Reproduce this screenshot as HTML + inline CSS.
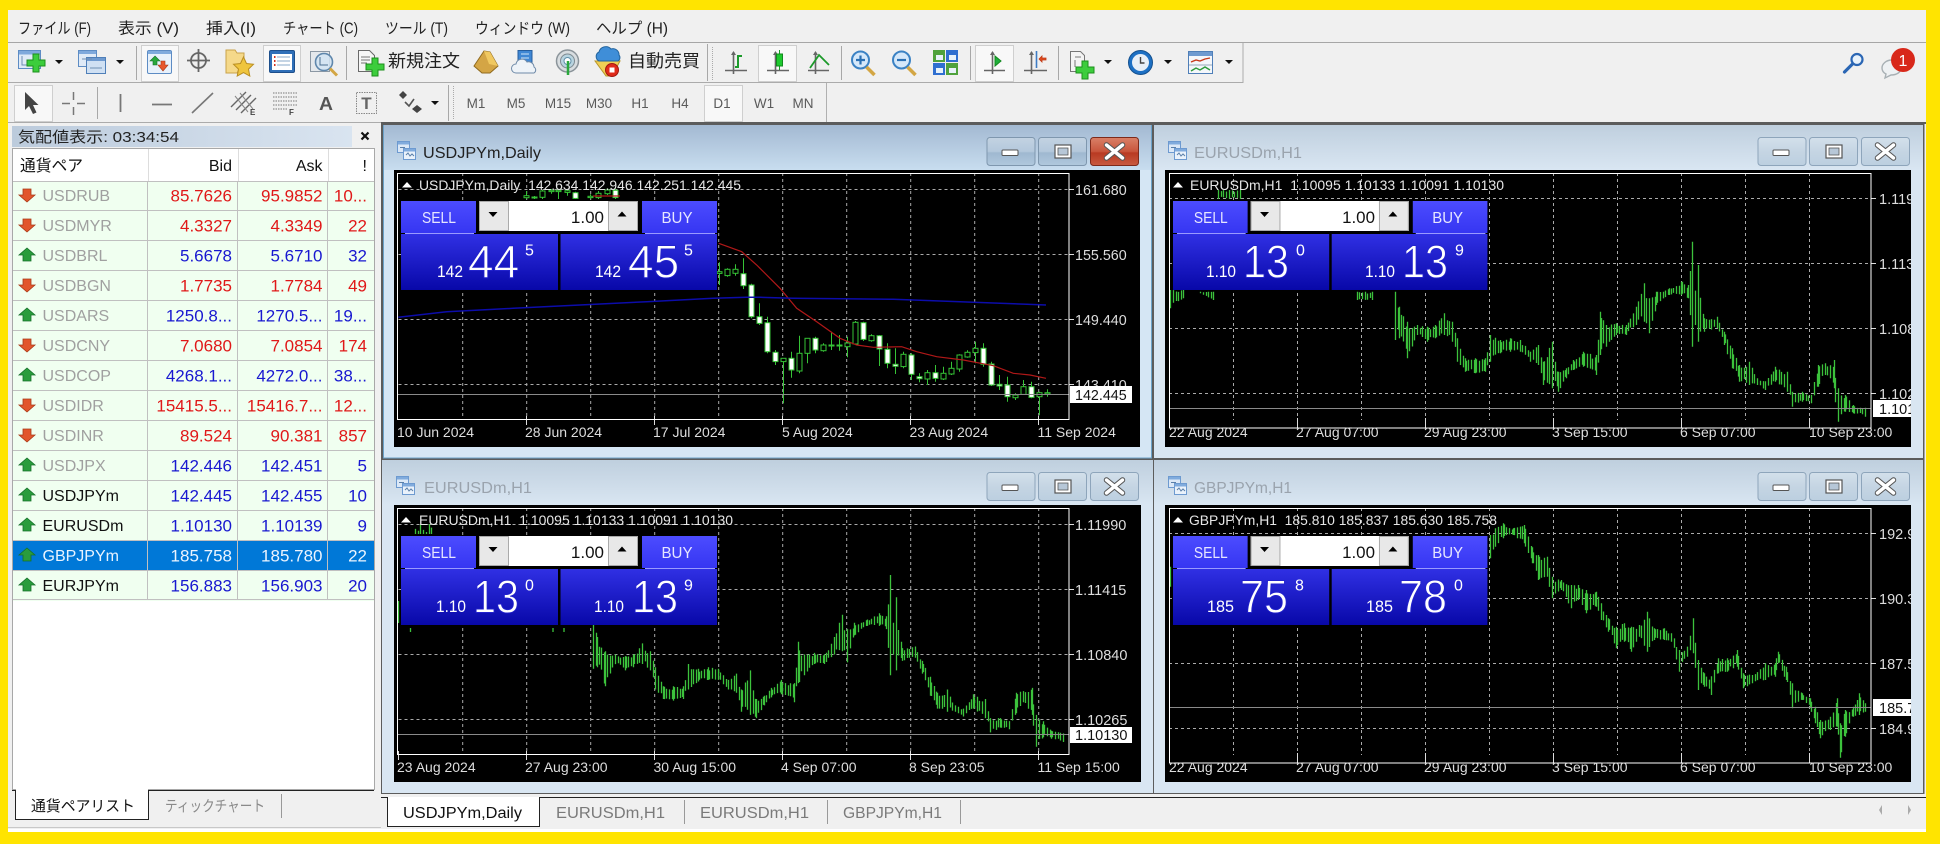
<!DOCTYPE html>
<html><head><meta charset="utf-8"><title>MT5</title>
<style>html,body{margin:0;padding:0;background:#ffe400;overflow:hidden;width:1940px;height:844px}svg{display:block;font-family:"Liberation Sans","Noto Sans CJK JP",sans-serif}</style>
</head><body>
<svg xmlns="http://www.w3.org/2000/svg" width="1940" height="844" viewBox="0 0 1940 844">
<defs>
<linearGradient id="tA" x1="0" y1="0" x2="0" y2="1"><stop offset="0" stop-color="#a3b9d2"/><stop offset="1" stop-color="#c8ddef"/></linearGradient>
<linearGradient id="tI" x1="0" y1="0" x2="0" y2="1"><stop offset="0" stop-color="#bfcfde"/><stop offset="1" stop-color="#d9e6f2"/></linearGradient>
<linearGradient id="tb" x1="0" y1="0" x2="1" y2="0"><stop offset="0" stop-color="#bccbdc"/><stop offset="1" stop-color="#d9e4f0"/></linearGradient>
<linearGradient id="gT" x1="0" y1="0" x2="0" y2="1"><stop offset="0" stop-color="#4c4cff"/><stop offset="1" stop-color="#3636f2"/></linearGradient>
<linearGradient id="gB" x1="0" y1="0" x2="0" y2="1"><stop offset="0" stop-color="#3030e4"/><stop offset="1" stop-color="#0808a8"/></linearGradient>
<linearGradient id="bI" x1="0" y1="0" x2="0" y2="1"><stop offset="0" stop-color="#d3e0eb"/><stop offset=".5" stop-color="#c5d5e3"/><stop offset="1" stop-color="#bccfe0"/></linearGradient>
<linearGradient id="bA" x1="0" y1="0" x2="0" y2="1"><stop offset="0" stop-color="#c3d3e2"/><stop offset=".5" stop-color="#b4c8dc"/><stop offset=".55" stop-color="#9fb8d0"/><stop offset="1" stop-color="#b0c8dd"/></linearGradient>
<linearGradient id="bC" x1="0" y1="0" x2="0" y2="1"><stop offset="0" stop-color="#d98068"/><stop offset=".5" stop-color="#c8553c"/><stop offset=".55" stop-color="#b83a22"/><stop offset="1" stop-color="#c85a40"/></linearGradient>

<g id="xi"><path d="M0 0L16 13M16 0L0 13" stroke="#555" stroke-width="5.5" stroke-linecap="round"/><path d="M0 0L16 13M16 0L0 13" stroke="#fff" stroke-width="3.4" stroke-linecap="round"/></g>
<g id="mm"><rect x="15.5" y="13" width="16" height="5.5" rx="1" fill="#fff" stroke="#555"/><rect x="68.5" y="8" width="16" height="13" fill="#fff" stroke="#555" stroke-width="1.2"/><rect x="71.5" y="11" width="10" height="7" fill="#b7c7d7" stroke="#555" stroke-width=".8"/></g>
<g id="wbI"><rect x=".5" y=".5" width="48" height="28" rx="3" fill="url(#bI)" stroke="#8ea5bb"/><rect x="52" y=".5" width="48" height="28" rx="3" fill="url(#bI)" stroke="#8ea5bb"/><rect x="104" y=".5" width="48" height="28" rx="3" fill="url(#bI)" stroke="#8ea5bb"/><use href="#mm"/><use href="#xi" x="120" y="8"/></g>

<g id="panel">
<rect x="0" y="0" width="316" height="89" fill="#000"/>
<rect x="0" y="0" width="75" height="32" fill="url(#gT)"/>
<rect x="241" y="0" width="75" height="32" fill="url(#gT)"/>
<rect x="0" y="33" width="157" height="56" fill="url(#gB)"/>
<rect x="159.500" y="33" width="156.500" height="56" fill="url(#gB)"/>
<path d="M4 32.500H73M244 32.500H314" stroke="#9a9aff"/>
<rect x="78" y="0" width="159" height="30" fill="#fff"/>
<rect x="78.500" y=".5" width="29" height="29" fill="#e8e8e8" stroke="#aaa"/>
<rect x="207.500" y=".5" width="29" height="29" fill="#e8e8e8" stroke="#aaa"/>
<path d="M87.500 11h9l-4.500 5zM216.500 15.500h9l-4.500-5z" fill="#000"/>
<text x="38" y="223" dy="-201" font-size="16" fill="#e6e6ff" text-anchor="middle" textLength="34" lengthAdjust="spacingAndGlyphs">SELL</text>
<text x="276" y="223" dy="-201" font-size="16" fill="#e6e6ff" text-anchor="middle" textLength="31" lengthAdjust="spacingAndGlyphs">BUY</text>
<text x="203" y="22" font-size="17" fill="#111" text-anchor="end">1.00</text>
</g>

<g id="wic"><rect x=".5" y=".5" width="12" height="11" fill="#dbe8f7" stroke="#6d9ad0"/><rect x="1" y="1" width="11" height="2.500" fill="#80abdd"/><rect x="6.500" y="7.500" width="12" height="11" fill="#eaf2fb" stroke="#6d9ad0"/><rect x="7" y="8" width="11" height="2.500" fill="#80abdd"/><path d="M3 6.500h5M9 14l2-2 2 3 2-2 2 2" stroke="#5a7fa8" fill="none" stroke-width="1"/></g>

<g id="plus"><path d="M-3 -9h6v6h6v6h-6v6h-6v-6h-6v-6h6z" fill="#3ccd3c" stroke="#1c8f1c"/></g>
<g id="up"><path d="M0-7L8 0H4V6H-4V0H-8Z" fill="#2a9c3c" stroke="#15702a" stroke-width=".8"/></g>
<g id="dn"><path d="M-4-6H4V0H8L0 7L-8 0H-4Z" fill="#e2562c" stroke="#a83a18" stroke-width=".8"/></g>
<clipPath id="c1"><rect x="397" y="173" width="672" height="247"/></clipPath>
<clipPath id="c2"><rect x="1169" y="173" width="702" height="255"/></clipPath>
<clipPath id="c3"><rect x="397" y="508" width="672" height="247"/></clipPath>
<clipPath id="c4"><rect x="1169" y="508" width="702" height="255"/></clipPath>
<clipPath id="k1"><rect x="394" y="170" width="746" height="277"/></clipPath>
<clipPath id="k2"><rect x="1165" y="170" width="746" height="277"/></clipPath>
<clipPath id="k3"><rect x="394" y="505" width="747" height="277"/></clipPath>
<clipPath id="k4"><rect x="1165" y="505" width="746" height="277"/></clipPath>
</defs>

<rect width="1940" height="844" fill="#ffe400"/>
<rect x="8" y="10" width="1918" height="822" fill="#f0f0f0"/>
<rect x="8" y="829" width="1918" height="3" fill="#fff"/>

<!-- menu -->
<g font-size="15.500" fill="#222">
<text x="18" y="33.500" textLength="73" lengthAdjust="spacingAndGlyphs">ファイル (F)</text>
<text x="118" y="33.500" textLength="61" lengthAdjust="spacingAndGlyphs">表示 (V)</text>
<text x="206" y="33.500" textLength="50" lengthAdjust="spacingAndGlyphs">挿入(I)</text>
<text x="283" y="33.500" textLength="75" lengthAdjust="spacingAndGlyphs">チャート (C)</text>
<text x="385" y="33.500" textLength="63" lengthAdjust="spacingAndGlyphs">ツール (T)</text>
<text x="475" y="33.500" textLength="95" lengthAdjust="spacingAndGlyphs">ウィンドウ (W)</text>
<text x="596" y="33.500" textLength="72" lengthAdjust="spacingAndGlyphs">ヘルプ (H)</text>
</g>
<path d="M8 42.500H1926" stroke="#a6a6a6"/>
<path d="M8 82.500H1243V43M8 122.500H381" stroke="#ababab" fill="none"/>
<path d="M826.500 83V122" stroke="#b0b0b0"/>

<!-- toolbar separators -->
<path d="M136.500 46V80M346.500 46V80M707.500 44V81M841.500 46V80M970.500 46V80M1058.500 46V80M97.500 87V119M448.500 85V121" stroke="#a8a8a8"/>
<path d="M712.500 47V80M453.500 86V120" stroke="#aaa" stroke-dasharray="1 1"/>

<!-- pressed -->
<g fill="#f8f8f8" stroke="#cfcfcf"><rect x="141.500" y="45.500" width="37" height="36"/><rect x="263.500" y="45.500" width="37" height="36"/><rect x="758.500" y="45.500" width="38" height="36"/><rect x="975.500" y="45.500" width="38" height="36"/><rect x="14.500" y="85.500" width="38" height="36"/><rect x="704.500" y="85.500" width="38" height="36"/></g>

<!-- new chart -->
<rect x="18.500" y="50.500" width="22" height="18" fill="#dfeaf7" stroke="#5d8cc4"/><rect x="19" y="51" width="21" height="3.500" fill="#7fa9dc"/><path d="M22 56v9h8" stroke="#6f8fb3" fill="none"/>
<use href="#plus" x="36" y="63"/>
<path d="M55 60h8l-4 4z" fill="#111"/>
<!-- profiles -->
<rect x="78.500" y="50.500" width="18" height="16" fill="#dfeaf7" stroke="#5d8cc4"/><rect x="79" y="51" width="17" height="3" fill="#7fa9dc"/>
<rect x="86.500" y="57.500" width="19" height="16" fill="#cfe0f3" stroke="#4f7fb8"/><rect x="87" y="58" width="18" height="3" fill="#6e9ad0"/><path d="M82 59h10M90 68h12" stroke="#6f8fb3"/>
<path d="M116 60h8l-4 4z" fill="#111"/>
<!-- market watch -->
<rect x="147.500" y="50.500" width="24" height="23" rx="1.500" fill="#e8f1fb" stroke="#5d8cc4"/><rect x="148" y="51" width="23" height="3" fill="#80abdd"/>
<path d="M155 56l5 5h-3v4h-4v-4h-3z" fill="#2aa83c" stroke="#15702a" stroke-width=".6"/><path d="M161 61h4v4h3l-5 6-5-6h3z" fill="#e8562c" stroke="#a83a18" stroke-width=".6"/>
<!-- crosshair -->
<circle cx="198.500" cy="60.500" r="7.500" fill="none" stroke="#666" stroke-width="1.800"/><path d="M198.500 49V72M187 60.500H210" stroke="#666" stroke-width="1.800"/>
<!-- folders star -->
<path d="M226 50h9l2 3h7v8l-7 12h-11z" fill="#f5d98a" stroke="#c9a24a"/><path d="M243.500 57l3 6.500 7 .8-5 4.800 1.300 7-6.300-3.500-6.300 3.500 1.300-7-5-4.800 7-.8z" fill="#efc53e" stroke="#b98e22"/>
<!-- navigator -->
<rect x="269.500" y="50.500" width="25" height="22" rx="1.500" fill="#2f6fb8" stroke="#1d4f8c"/><rect x="272" y="54" width="20" height="16" fill="#fff"/><path d="M274 57h1.500M274 61h1.500M274 65h1.500" stroke="#d03020" stroke-width="2"/><path d="M277 57h13M277 61h13M277 65h13" stroke="#8aa8c8"/>
<!-- tester -->
<rect x="310.500" y="51.500" width="19" height="20" fill="#e4e8ec" stroke="#8c98a4"/><circle cx="324" cy="62" r="8.500" fill="#d2e4f3" fill-opacity=".85" stroke="#5f87ac" stroke-width="1.600"/><path d="M330 68.500l7 7" stroke="#d3a644" stroke-width="3"/><path d="M320 57v8h8" fill="none" stroke="#4a6f90"/>
<!-- new order -->
<path d="M358.500 50.500h11l5 5v16h-16z" fill="#f6f6f6" stroke="#6a6a6a"/><path d="M361 57h9M361 60h9M361 63h6" stroke="#777"/>
<use href="#plus" x="375" y="67"/>
<text x="388" y="67" font-size="17.500" fill="#222" textLength="72" lengthAdjust="spacingAndGlyphs">新規注文</text>
<!-- market -->
<path d="M474 66l10-15 6 1 8 14-8 7h-8z" fill="#d4a545" stroke="#8f6a1f"/><path d="M484 51l6 1 8 14-9-2z" fill="#f0c860"/>
<!-- signals/vps -->
<rect x="518" y="50.500" width="14" height="15" fill="#3f87d4" stroke="#265e9e"/><path d="M521 54h8M521 58h8" stroke="#cfe4f8"/><path d="M516 73a4.500 4.500 0 0 1 0-9 6 6 0 0 1 11-2 5.500 5.500 0 0 1 7 5 3.500 3.500 0 0 1 0 6z" fill="#eef3f8" stroke="#6f8aa8"/>
<!-- radar -->
<circle cx="567.500" cy="61" r="11" fill="#d8dde0" stroke="#8b949a" stroke-width="1.500"/><circle cx="567.500" cy="61" r="7" fill="#b8d4e0" stroke="#7e8a90"/><circle cx="567.500" cy="61" r="3.500" fill="#fff" stroke="#5f8fa8"/><path d="M568 61v14" stroke="#2aa83c" stroke-width="2.500"/>
<!-- auto trading -->
<path d="M595 61l11 15h6l8-15z" fill="#f0cf55" stroke="#b8962a"/><path d="M599 61a5 5 0 0 1 0-9 7 7 0 0 1 12-3 6 6 0 0 1 8 6 4 4 0 0 1-1 6z" fill="#3f8ed8" stroke="#24659e"/><circle cx="612" cy="70" r="6.500" fill="#e02a1a" stroke="#a01810"/><rect x="609.500" y="67.500" width="5" height="5" fill="#fff"/>
<text x="628" y="67" font-size="17.500" fill="#222" textLength="72" lengthAdjust="spacingAndGlyphs">自動売買</text>

<!-- chart types -->
<g stroke="#666" stroke-width="1.600" fill="none">
<path d="M733.500 52V74M725 70.500H747"/><path d="M775.500 52V74M767 70.500H789"/><path d="M815.500 52V74M808 70.500H829"/>
<path d="M992.500 52V74M984 70.500H1005"/><path d="M1031.500 52V74M1024 70.500H1047"/>
</g>
<path d="M733.500 51l-2.500 4h5zM775.500 51l-2.500 4h5zM815.500 51l-2.500 4h5zM992.500 51l-2.500 4h5zM1031.500 51l-2.500 4h5z" fill="#666"/>
<path d="M738 68V56h4" stroke="#1c9a2a" stroke-width="2" fill="none"/><path d="M735 67h4" stroke="#1c9a2a" stroke-width="2"/>
<path d="M779.500 50V70" stroke="#1a9a28"/><rect x="776.500" y="54" width="6" height="12" fill="#1fc92f" stroke="#128a1e"/>
<path d="M810 68l9-13 10 10" stroke="#1c9a2a" stroke-width="1.800" fill="none"/>
<!-- zoom -->
<circle cx="860.500" cy="60" r="8.500" fill="#d5e8fa" stroke="#3b82c4" stroke-width="2"/><path d="M856 60h9M860.500 55.500v9" stroke="#2a70b4" stroke-width="2.200"/><path d="M866.500 67l8 8" stroke="#d3a644" stroke-width="3.500"/>
<circle cx="901.500" cy="60" r="8.500" fill="#d5e8fa" stroke="#3b82c4" stroke-width="2"/><path d="M897 60h9" stroke="#2a70b4" stroke-width="2.200"/><path d="M907.500 67l8 8" stroke="#d3a644" stroke-width="3.500"/>
<!-- tile -->
<rect x="933" y="50" width="12" height="12" fill="#4fa23c"/><rect x="946" y="50" width="12" height="12" fill="#2f6fd0"/><rect x="933" y="63" width="12" height="12" fill="#2f6fd0"/><rect x="946" y="63" width="12" height="12" fill="#4fa23c"/>
<g fill="#e8f2fa"><rect x="936" y="55" width="7" height="5"/><rect x="949" y="55" width="7" height="5"/><rect x="936" y="68" width="7" height="5"/><rect x="949" y="68" width="7" height="5"/></g>
<!-- autoscroll / shift -->
<path d="M995 56l6 5-6 5z" fill="#1fae3a" stroke="#128a1e"/>
<path d="M1036.500 51V68" stroke="#3e7cc4" stroke-width="1.600"/><path d="M1039 59l3-3v2h4v2h-4v2z" fill="#e04a20" stroke="#c03a14" stroke-width=".8"/>
<!-- template -->
<path d="M1070.500 51.500h10l4 4v16h-14z" fill="#f4f4f4" stroke="#777"/><path d="M1075 57h6M1075 60v7" stroke="#777"/>
<use href="#plus" x="1085" y="70"/>
<path d="M1104 60h8l-4 4z" fill="#111"/>
<!-- clock -->
<circle cx="1140.500" cy="62.500" r="12" fill="#1d70c4" stroke="#14508e"/><circle cx="1140.500" cy="62.500" r="8.500" fill="#e8eff7"/><path d="M1140.500 57v6h4" stroke="#444" fill="none" stroke-width="1.400"/>
<path d="M1164 60h8l-4 4z" fill="#111"/>
<!-- indicators -->
<rect x="1188.500" y="51.500" width="24" height="22" fill="#f4f7fb" stroke="#4f7fb8"/><rect x="1189" y="52" width="23" height="4" fill="#6e9ad0"/><path d="M1191 62l5-2 4 1 5-2 5-1" stroke="#c83a1c" fill="none" stroke-width="1.400"/><path d="M1191 71l5-3 4 2 5-3 5 3" stroke="#2c9a3a" fill="none" stroke-width="1.400"/><path d="M1189 65h23" stroke="#9ab"/>
<path d="M1225 60h8l-4 4z" fill="#111"/>
<!-- search / bubble -->
<circle cx="1857" cy="59.500" r="5.500" fill="#e8f2fb" stroke="#2a66b4" stroke-width="2.200"/><path d="M1852.500 64l-8 8" stroke="#2a66b4" stroke-width="3.200" stroke-linecap="round"/>
<path d="M1892 60c-6 0-10 4-10 8 0 3 2 5 4 6l-1 4 6-3c6 0 10-3 10-7 0-5-4-8-9-8z" fill="#eef1f3" stroke="#a8b0b4" stroke-width="1.400"/>
<circle cx="1903" cy="60" r="12" fill="#d8281a"/><text x="1903" y="66" font-size="16" fill="#fff" text-anchor="middle">1</text>

<!-- toolbar 2 -->
<path d="M25 92V110L29 106L33 114L36.500 112.500L33 105H38.500Z" fill="#444"/>
<path d="M62 103.500H70M77 103.500H85M73.500 92V100M73.500 107V115" stroke="#777" stroke-width="1.500"/>
<path d="M120.500 94V112" stroke="#777" stroke-width="1.800"/><path d="M152 104.500H172" stroke="#777" stroke-width="1.800"/><path d="M192 113L213 93" stroke="#777" stroke-width="1.600"/>
<path d="M231 107L246 92M236 110L251 95M241 113L256 98" stroke="#666" stroke-width="1.400"/><path d="M235 96L248 112M240 93L253 109" stroke="#888"/>
<text x="250" y="115" font-size="8" font-weight="bold" fill="#444">E</text>
<path d="M273 93H297M273 97H297M273 101H297M273 105H297M273 109H287" stroke="#777" stroke-dasharray="1.500 1"/>
<text x="289" y="115" font-size="8" font-weight="bold" fill="#444">F</text>
<text x="319" y="110" font-size="18" font-weight="bold" fill="#555" textLength="14" lengthAdjust="spacingAndGlyphs">A</text>
<rect x="356.500" y="92.500" width="20" height="21" fill="none" stroke="#888" stroke-dasharray="1.500 1"/><text x="366.500" y="109" font-size="17" font-weight="bold" fill="#666" text-anchor="middle">T</text>
<path d="M403 91l4 4-4 4-4-4zM417 105l5 4-5 4-5-4z" fill="#444"/><path d="M405 102l4 4 5-7" stroke="#555" stroke-width="1.600" fill="none"/>
<path d="M431 101h8l-4 4z" fill="#111"/>
<g font-size="13.500" fill="#5a5a5a" text-anchor="middle">
<text x="476" y="108">M1</text><text x="516" y="108">M5</text><text x="558" y="108">M15</text><text x="599" y="108">M30</text><text x="640" y="108">H1</text><text x="680" y="108">H4</text><text x="722" y="108">D1</text><text x="764" y="108">W1</text><text x="803" y="108">MN</text>
</g>

<!-- LEFT PANEL -->
<rect x="12" y="126" width="340" height="21" fill="url(#tb)"/>
<text x="18" y="142" font-size="15" fill="#222" textLength="161" lengthAdjust="spacingAndGlyphs">気配値表示: 03:34:54</text>
<path d="M361.500 132.500l7 7m0-7l-7 7" stroke="#111" stroke-width="2.200"/>
<rect x="12.500" y="148.500" width="362" height="641" fill="#fff" stroke="#a8a8a8"/>
<rect x="13" y="181" width="361" height="420" fill="#f0fff0"/>
<rect x="13" y="540" width="361" height="30" fill="#0078d7"/>
<path d="M148.500 149V181M238.500 149V181M328.500 149V181" stroke="#ddd"/>
<path d="M13 181.500H374M13 210.500H374M13 240.500H374M13 270.500H374M13 300.500H374M13 330.500H374M13 360.500H374M13 390.500H374M13 420.500H374M13 450.500H374M13 480.500H374M13 510.500H374M13 540.500H374M13 570.500H374M13 599.500H374M147.500 181V600M237.500 181V600M327.500 181V600" stroke="#c0c0c0"/>
<g font-size="16" fill="#111">
<text x="20" y="171" textLength="63" lengthAdjust="spacingAndGlyphs">通貨ペア</text>
<text x="232" y="171" text-anchor="end">Bid</text><text x="322.500" y="171" text-anchor="end">Ask</text><text x="367" y="171" text-anchor="end">!</text>
</g>
<g transform="translate(0 -1)">
<g font-size="16" fill="#a0a0a0">
<text x="42.500" y="202">USDRUB</text><text x="42.500" y="232">USDMYR</text><text x="42.500" y="262">USDBRL</text><text x="42.500" y="292">USDBGN</text><text x="42.500" y="322">USDARS</text><text x="42.500" y="352">USDCNY</text><text x="42.500" y="382">USDCOP</text><text x="42.500" y="412">USDIDR</text><text x="42.500" y="442">USDINR</text><text x="42.500" y="472">USDJPX</text>
<text x="42.500" y="502" fill="#111">USDJPYm</text><text x="42.500" y="532" fill="#111">EURUSDm</text><text x="42.500" y="562" fill="#eaf4ff">GBPJPYm</text><text x="42.500" y="592" fill="#111">EURJPYm</text>
</g>
<g>
<use href="#dn" x="27" y="196"/><use href="#dn" x="27" y="226"/><use href="#up" x="27" y="256"/><use href="#dn" x="27" y="286"/><use href="#up" x="27" y="316"/><use href="#dn" x="27" y="346"/><use href="#up" x="27" y="376"/><use href="#dn" x="27" y="406"/><use href="#dn" x="27" y="436"/><use href="#up" x="27" y="466"/><use href="#up" x="27" y="496"/><use href="#up" x="27" y="526"/><use href="#up" x="27" y="556"/><use href="#up" x="27" y="586"/>
</g>
<g font-size="17" text-anchor="end" fill="#e01818">
<text x="232" y="202.500">85.7626</text><text x="322.500" y="202.500">95.9852</text><text x="367" y="202.500">10...</text>
<text x="232" y="232.500">4.3327</text><text x="322.500" y="232.500">4.3349</text><text x="367" y="232.500">22</text>
<text x="232" y="292.500">1.7735</text><text x="322.500" y="292.500">1.7784</text><text x="367" y="292.500">49</text>
<text x="232" y="352.500">7.0680</text><text x="322.500" y="352.500">7.0854</text><text x="367" y="352.500">174</text>
<text x="232" y="412.500">15415.5...</text><text x="322.500" y="412.500">15416.7...</text><text x="367" y="412.500">12...</text>
<text x="232" y="442.500">89.524</text><text x="322.500" y="442.500">90.381</text><text x="367" y="442.500">857</text>
</g>
<g font-size="17" text-anchor="end" fill="#1818d0">
<text x="232" y="262.500">5.6678</text><text x="322.500" y="262.500">5.6710</text><text x="367" y="262.500">32</text>
<text x="232" y="322.500">1250.8...</text><text x="322.500" y="322.500">1270.5...</text><text x="367" y="322.500">19...</text>
<text x="232" y="382.500">4268.1...</text><text x="322.500" y="382.500">4272.0...</text><text x="367" y="382.500">38...</text>
<text x="232" y="472.500">142.446</text><text x="322.500" y="472.500">142.451</text><text x="367" y="472.500">5</text>
<text x="232" y="502.500">142.445</text><text x="322.500" y="502.500">142.455</text><text x="367" y="502.500">10</text>
<text x="232" y="532.500">1.10130</text><text x="322.500" y="532.500">1.10139</text><text x="367" y="532.500">9</text>
<text x="232" y="592.500">156.883</text><text x="322.500" y="592.500">156.903</text><text x="367" y="592.500">20</text>
</g>
<g font-size="17" text-anchor="end" fill="#eaf4ff">
<text x="232" y="562.500">185.758</text><text x="322.500" y="562.500">185.780</text><text x="367" y="562.500">22</text>
</g>
</g>
<!-- left tabs -->
<rect x="9" y="790" width="372" height="38" fill="#f0f0f0"/>
<path d="M12 790.500H374" stroke="#222"/>
<path d="M15.500 790.500V819.500H148.500V790.500" fill="#fff" stroke="#222"/><rect x="16" y="788" width="132" height="31" fill="#fff"/><path d="M15.500 819.500H148.500M148.500 790V820M15.500 790V820" stroke="#222"/><path d="M148 790.500H374" stroke="#222"/>
<text x="31" y="811" font-size="15" fill="#111" textLength="104" lengthAdjust="spacingAndGlyphs">通貨ペアリスト</text>
<text x="165" y="811" font-size="15" fill="#8a8a8a" textLength="100" lengthAdjust="spacingAndGlyphs">ティックチャート</text>
<path d="M281.500 794V818" stroke="#999"/>
<path d="M8 827.500H381" stroke="#c8c8c8"/>

<!-- CHART AREA -->
<rect x="381" y="122" width="1545" height="675" fill="#5c5c5c"/>
<rect x="1924.500" y="124" width="1.500" height="673" fill="#f0f0f0"/>
<rect x="381" y="794" width="1545" height="3" fill="#f0f0f0"/>

<!-- W1 -->
<rect x="383" y="125" width="769" height="45" fill="url(#tA)"/>
<rect x="383" y="170" width="769" height="288" fill="#d5e6f4"/>
<path d="M383.500 125V458M1151.500 125V458H383" stroke="#6ba2c8" fill="none"/>
<use href="#wic" x="397" y="141"/>
<text x="423" y="158" font-size="16" fill="#222" textLength="118" lengthAdjust="spacingAndGlyphs">USDJPYm,Daily</text>
<g transform="translate(986.500 137)"><rect x=".5" y=".5" width="48" height="28" rx="3" fill="url(#bA)" stroke="#7f97ae"/><rect x="52" y=".5" width="48" height="28" rx="3" fill="url(#bA)" stroke="#7f97ae"/><rect x="104" y=".5" width="48" height="28" rx="3" fill="url(#bC)" stroke="#7d2a1b"/><use href="#mm"/><use href="#xi" x="120" y="8"/></g>
<rect x="394" y="170" width="746" height="277" fill="#000"/>
<g clip-path="url(#k1)">
<path d="M398.500 189.500H1069M398.500 254.500H1069M398.500 319.500H1069M398.500 384.500H1069M462.700 173V420M526.700 173V420M590.700 173V420M654.700 173V420M718.700 173V420M782.700 173V420M846.700 173V420M910.700 173V420M974.700 173V420M1038.700 173V420" stroke="#aaa" stroke-dasharray="3 3" fill="none"/>
<path d="M1069 189.500h5M1069 254.500h5M1069 319.500h5M1069 384.500h5M526.500 416v9M654.500 416v9M782.500 416v9M910.500 416v9M1038.500 416v9" stroke="#ddd"/>
<g clip-path="url(#c1)"><g id="cand"></g><polyline id="mr" fill="none" stroke="#b01818" stroke-width="1.200"/><polyline id="mb" fill="none" stroke="#0c0caa" stroke-width="1.500"/><path d="M593 196H620" stroke="#b01818" stroke-width="1.200"/></g>
<path d="M397 394.500H1069" stroke="#8a8a8a"/>
<rect x="397.500" y="173.500" width="671.500" height="246" fill="none" stroke="#fff"/>
<g font-size="14.300" fill="#ddd"><text x="1075" y="195">161.680</text><text x="1075" y="260">155.560</text><text x="1075" y="325">149.440</text><text x="1075" y="390">143.410</text></g>
<rect x="1070" y="386" width="62" height="17" fill="#fff"/><text x="1075" y="400" font-size="14.300" fill="#111">142.445</text>
<g font-size="14" fill="#ddd"><text x="397" y="437">10 Jun 2024</text><text x="525" y="437">28 Jun 2024</text><text x="653" y="437">17 Jul 2024</text><text x="782" y="437">5 Aug 2024</text><text x="909.500" y="437">23 Aug 2024</text><text x="1037.500" y="437">11 Sep 2024</text></g>
</g>
<use href="#panel" x="401" y="201"/>
<path d="M402 187.500h10l-5-5.500z" fill="#fff"/>
<text x="419" y="190" font-size="13.500" fill="#e6e6e6" textLength="322" lengthAdjust="spacingAndGlyphs">USDJPYm,Daily&#160;&#160;142.634 142.946 142.251 142.445</text>
<g fill="#fff"><text x="437" y="277" font-size="17" textLength="26" lengthAdjust="spacingAndGlyphs">142</text><text x="468" y="277.500" font-size="46" stroke="#2222cc" stroke-width=".9">44</text><text x="525" y="255.500" font-size="16">5</text><text x="595" y="277" font-size="17" textLength="26" lengthAdjust="spacingAndGlyphs">142</text><text x="628" y="277.500" font-size="46" stroke="#2222cc" stroke-width=".9">45</text><text x="684" y="255.500" font-size="16">5</text></g>

<!-- W2 -->
<rect x="1154" y="125" width="769" height="45" fill="url(#tI)"/>
<rect x="1154" y="170" width="769" height="288" fill="#d9e6f2"/>
<use href="#wic" x="1168" y="141"/>
<text x="1194" y="158" font-size="16" fill="#9aa3ad" textLength="108" lengthAdjust="spacingAndGlyphs">EURUSDm,H1</text>
<use href="#wbI" x="1757.500" y="137"/>
<rect x="1165" y="170" width="746" height="277" fill="#000"/>
<g clip-path="url(#k2)">
<path d="M1169 198.500H1871M1169 263.500H1871M1169 328.500H1871M1169 393.500H1871M1233.500 173V420M1297.500 173V420M1361.500 173V420M1425.500 173V420M1489.500 173V420M1553.500 173V420M1617.500 173V420M1681.500 173V420M1745.500 173V420M1809.500 173V420" stroke="#aaa" stroke-dasharray="3 3" fill="none"/>
<path d="M1871 198.500h5M1871 263.500h5M1871 328.500h5M1871 393.500h5M1169.500 418v10M1297.500 418v10M1425.500 418v10M1553.500 418v10M1681.500 418v10M1809.500 418v10" stroke="#ddd"/>
<g clip-path="url(#c2)"><path id="b2" stroke="#3cc23c" stroke-width="1.300" fill="none"/></g>
<path d="M1169 408.500H1871" stroke="#8a8a8a"/>
<rect x="1169.500" y="173.500" width="701.500" height="254.500" fill="none" stroke="#fff"/>
<g font-size="14.500" fill="#ddd"><text x="1879" y="204">1.11950</text><text x="1879" y="269">1.11375</text><text x="1879" y="334">1.10800</text><text x="1879" y="399">1.10225</text></g>
<rect x="1873" y="400" width="38" height="17" fill="#fff"/><text x="1879" y="414" font-size="14.500" fill="#111">1.10130</text>
</g>
<g font-size="14" fill="#ddd"><text x="1169" y="437">22 Aug 2024</text><text x="1296" y="437">27 Aug 07:00</text><text x="1424" y="437">29 Aug 23:00</text><text x="1552" y="437">3 Sep 15:00</text><text x="1680" y="437">6 Sep 07:00</text><text x="1809" y="437">10 Sep 23:00</text></g>
<use href="#panel" transform="translate(1173 201) scale(.995 1)"/>
<path d="M1173 187.500h10l-5-5.500z" fill="#fff"/>
<text x="1190" y="190" font-size="13.500" fill="#e6e6e6" textLength="314" lengthAdjust="spacingAndGlyphs">EURUSDm,H1&#160;&#160;1.10095 1.10133 1.10091 1.10130</text>
<g fill="#fff"><text x="1206" y="277" font-size="17" textLength="30" lengthAdjust="spacingAndGlyphs">1.10</text><text x="1243" y="277.500" font-size="46" textLength="46" lengthAdjust="spacingAndGlyphs" stroke="#2222cc" stroke-width=".9">13</text><text x="1296" y="255.500" font-size="16">0</text><text x="1365" y="277" font-size="17" textLength="30" lengthAdjust="spacingAndGlyphs">1.10</text><text x="1402" y="277.500" font-size="46" textLength="46" lengthAdjust="spacingAndGlyphs" stroke="#2222cc" stroke-width=".9">13</text><text x="1455" y="255.500" font-size="16">9</text></g>

<!-- W3 -->
<rect x="382" y="460" width="771" height="45" fill="url(#tI)"/>
<rect x="382" y="505" width="771" height="288" fill="#d9e6f2"/>
<use href="#wic" x="396" y="476"/>
<text x="424" y="493" font-size="16" fill="#9aa3ad" textLength="108" lengthAdjust="spacingAndGlyphs">EURUSDm,H1</text>
<use href="#wbI" x="986.500" y="472"/>
<rect x="394" y="505" width="747" height="277" fill="#000"/>
<g clip-path="url(#k3)">
<path d="M398.500 524.500H1069M398.500 589.500H1069M398.500 654.500H1069M398.500 719.500H1069M462.700 508V755M526.700 508V755M590.700 508V755M654.700 508V755M718.700 508V755M782.700 508V755M846.700 508V755M910.700 508V755M974.700 508V755M1038.700 508V755" stroke="#aaa" stroke-dasharray="3 3" fill="none"/>
<path d="M1069 524.500h5M1069 589.500h5M1069 654.500h5M1069 719.500h5M398.500 751v9M526.500 751v9M654.500 751v9M782.500 751v9M910.500 751v9M1038.500 751v9" stroke="#ddd"/>
<g clip-path="url(#c3)"><path id="b3" stroke="#3cc23c" stroke-width="1.300" fill="none"/></g>
<path d="M397 734.500H1069" stroke="#8a8a8a"/>
<rect x="397.500" y="508.500" width="671.500" height="246" fill="none" stroke="#fff"/>
<g font-size="14.500" fill="#ddd"><text x="1075" y="530">1.11990</text><text x="1075" y="595">1.11415</text><text x="1075" y="660">1.10840</text><text x="1075" y="725">1.10265</text></g>
<rect x="1070" y="727" width="62" height="16" fill="#fff"/><text x="1075" y="740" font-size="14.500" fill="#111">1.10130</text>
<g font-size="14" fill="#ddd"><text x="397" y="772">23 Aug 2024</text><text x="525" y="772">27 Aug 23:00</text><text x="653.500" y="772">30 Aug 15:00</text><text x="781" y="772">4 Sep 07:00</text><text x="909" y="772">8 Sep 23:05</text><text x="1037.500" y="772">11 Sep 15:00</text></g>
</g>
<use href="#panel" x="401" y="536"/>
<path d="M401 522.500h10l-5-5.500z" fill="#fff"/>
<text x="419" y="525" font-size="13.500" fill="#e6e6e6" textLength="314" lengthAdjust="spacingAndGlyphs">EURUSDm,H1&#160;&#160;1.10095 1.10133 1.10091 1.10130</text>
<g fill="#fff"><text x="436" y="612" font-size="17" textLength="30" lengthAdjust="spacingAndGlyphs">1.10</text><text x="473" y="612.500" font-size="46" textLength="46" lengthAdjust="spacingAndGlyphs" stroke="#2222cc" stroke-width=".9">13</text><text x="525" y="590.500" font-size="16">0</text><text x="594" y="612" font-size="17" textLength="30" lengthAdjust="spacingAndGlyphs">1.10</text><text x="632" y="612.500" font-size="46" textLength="46" lengthAdjust="spacingAndGlyphs" stroke="#2222cc" stroke-width=".9">13</text><text x="684" y="590.500" font-size="16">9</text></g>

<!-- W4 -->
<rect x="1154" y="460" width="769" height="45" fill="url(#tI)"/>
<rect x="1154" y="505" width="769" height="288" fill="#d9e6f2"/>
<use href="#wic" x="1168" y="476"/>
<text x="1194" y="493" font-size="16" fill="#9aa3ad" textLength="98" lengthAdjust="spacingAndGlyphs">GBPJPYm,H1</text>
<use href="#wbI" x="1757.500" y="472"/>
<rect x="1165" y="505" width="746" height="277" fill="#000"/>
<g clip-path="url(#k4)">
<path d="M1169 533.500H1871M1169 598.500H1871M1169 663.500H1871M1169 728.500H1871M1233.500 508V755M1297.500 508V755M1361.500 508V755M1425.500 508V755M1489.500 508V755M1553.500 508V755M1617.500 508V755M1681.500 508V755M1745.500 508V755M1809.500 508V755" stroke="#aaa" stroke-dasharray="3 3" fill="none"/>
<path d="M1871 533.500h5M1871 598.500h5M1871 663.500h5M1871 728.500h5M1169.500 753v10M1297.500 753v10M1425.500 753v10M1553.500 753v10M1681.500 753v10M1809.500 753v10" stroke="#ddd"/>
<g clip-path="url(#c4)"><path id="b4" stroke="#3cc23c" stroke-width="1.300" fill="none"/></g>
<path d="M1169 707.500H1871" stroke="#8a8a8a"/>
<rect x="1169.500" y="508.500" width="701.500" height="254.500" fill="none" stroke="#fff"/>
<g font-size="14.500" fill="#ddd"><text x="1879" y="539">192.940</text><text x="1879" y="604">190.340</text><text x="1879" y="669">187.540</text><text x="1879" y="734">184.940</text></g>
<rect x="1873" y="699" width="38" height="17" fill="#fff"/><text x="1879" y="713" font-size="14.500" fill="#111">185.758</text>
</g>
<g font-size="14" fill="#ddd"><text x="1169" y="772">22 Aug 2024</text><text x="1296" y="772">27 Aug 07:00</text><text x="1424" y="772">29 Aug 23:00</text><text x="1552" y="772">3 Sep 15:00</text><text x="1680" y="772">6 Sep 07:00</text><text x="1809" y="772">10 Sep 23:00</text></g>
<use href="#panel" transform="translate(1173 536) scale(.995 1)"/>
<path d="M1173 522.500h10l-5-5.500z" fill="#fff"/>
<text x="1189" y="525" font-size="13.500" fill="#e6e6e6" textLength="308" lengthAdjust="spacingAndGlyphs">GBPJPYm,H1&#160;&#160;185.810 185.837 185.630 185.758</text>
<g fill="#fff"><text x="1207" y="612" font-size="17" textLength="27" lengthAdjust="spacingAndGlyphs">185</text><text x="1240" y="612.500" font-size="46" textLength="48" lengthAdjust="spacingAndGlyphs" stroke="#2222cc" stroke-width=".9">75</text><text x="1295" y="590.500" font-size="16">8</text><text x="1366" y="612" font-size="17" textLength="27" lengthAdjust="spacingAndGlyphs">185</text><text x="1399" y="612.500" font-size="46" textLength="48" lengthAdjust="spacingAndGlyphs" stroke="#2222cc" stroke-width=".9">78</text><text x="1454" y="590.500" font-size="16">0</text></g>

<!-- bottom tabs -->
<rect x="381" y="797" width="1545" height="32" fill="#f0f0f0"/>
<path d="M381 797.500H1926" stroke="#222"/>
<path d="M387.500 797V826.500H539.500V797" fill="#fff" stroke="#222"/>
<text x="403" y="818" font-size="15.500" fill="#111" textLength="119" lengthAdjust="spacingAndGlyphs">USDJPYm,Daily</text>
<g font-size="15.500" fill="#7a7a7a"><text x="556" y="818" textLength="109" lengthAdjust="spacingAndGlyphs">EURUSDm,H1</text><text x="700" y="818" textLength="109" lengthAdjust="spacingAndGlyphs">EURUSDm,H1</text><text x="843" y="818" textLength="99" lengthAdjust="spacingAndGlyphs">GBPJPYm,H1</text></g>
<path d="M684.500 800V824M827.500 800V824M960.500 800V824" stroke="#999"/>
<path d="M1879 810l3-5v10zM1911 810l-3-5v10z" fill="#aaa"/>
</svg>
<script>
(function(){
var s=12345;function R(){s=(s*1103515245+12345)&2147483647;return s/2147483647;}
function bars(id,segs,fx,fy,step){var d='';segs.forEach(function(a){
 var x0=fx(a[0][0]),x1=fx(a[a.length-1][0]);
 for(var x=x0;x<=x1+.01;x+=step){
  var i=0;while(i<a.length-2&&fx(a[i+1][0])<x)i++;
  var p=a[i],q=a[i+1]||a[i],t=fx(q[0])>fx(p[0])?(x-fx(p[0]))/(fx(q[0])-fx(p[0])):0;
  var hi=p[1]+(q[1]-p[1])*t,lo=p[2]+(q[2]-p[2])*t,r=lo-hi;
  var u=hi+R()*r*.25,v=lo-R()*r*.25;
  d+='M'+(Math.round(x)+.5)+' '+fy(u).toFixed(1)+'V'+fy(v).toFixed(1);
 }
 a.forEach(function(p){d+='M'+(Math.round(fx(p[0]))+.5)+' '+fy(p[1]).toFixed(1)+'V'+fy(p[2]).toFixed(1);});
 });document.getElementById(id).setAttribute('d',d);}
var main2=[[487,500,645],[495,545,640],[510,590,700],[530,600,630],[550,605,650],[565,600,640],[583,565,630],[600,590,650],[610,640,710],[625,700,740],[645,700,745],[665,700,740],[675,630,710],[695,645,685],[715,640,680],[735,645,680],[755,680,710],[770,660,720],[780,710,780],[798,650,790],[810,740,800],[825,730,760],[840,705,735],[860,680,725],[885,690,750],[893,560,690],[905,600,665],[925,595,630],[945,600,630],[965,545,600],[980,475,590],[990,520,625],[1005,500,540],[1030,490,510],[1055,470,510],[1068,480,520],[1075,350,665],[1081,500,600],[1087,420,650],[1100,580,620],[1125,575,610],[1140,620,660],[1155,670,730],[1170,720,770],[1190,710,780],[1205,760,780],[1220,770,795],[1240,725,770],[1265,740,800],[1275,800,845],[1295,800,830],[1312,810,835],[1325,720,785],[1340,715,750],[1357,705,790],[1365,790,890],[1380,810,860],[1395,840,865],[1420,848,875]];
var x2=function(z){return 1150+z/1.985},y2=function(z){return 125+z/3};
bars('b2',[main2,[[40,495,550],[65,495,520]],[[100,500,505],[125,500,525]],[[135,195,222],[178,195,222]],[[410,500,525],[440,500,525]]],x2,y2,2.7);
bars('b3',[main2],function(z){return x2(z)-802},function(z){return 460+(345+(z-350)*.954)/3},2.7);
var d3=document.getElementById('b3').getAttribute('d');
function seg(x,a,b){return 'M'+x+' '+a+'V'+b}
d3+=seg(398.5,601,623)+seg(410.5,628,632)+seg(553,628,632)+seg(564,628,632);
for(var i=0;i<18;i+=2.7){d3+=seg(Math.round(415+i)+.5,523+R()*10,534);}
document.getElementById('b3').setAttribute('d',d3);
var m4=[[675,225,295],[685,205,260],[700,190,235],[720,205,225],[742,195,250],[758,262,310],[770,285,360],[788,290,350],[798,350,415],[815,360,390],[835,375,445],[850,375,420],[865,390,460],[885,395,440],[895,430,480],[910,475,515],[925,500,565],[940,490,545],[955,500,575],[970,495,530],[987,455,575],[1000,505,540],[1020,505,540],[1035,520,545],[1050,570,635],[1065,560,590],[1077,475,580],[1087,600,690],[1100,640,680],[1113,650,705],[1128,595,640],[1145,595,635],[1165,570,620],[1178,640,685],[1195,645,670],[1220,610,660],[1240,610,650],[1247,575,610],[1262,620,660],[1275,670,745],[1295,700,720],[1310,715,745],[1320,740,790],[1330,780,835],[1350,770,810],[1363,715,800],[1370,790,893],[1380,750,830],[1395,740,770],[1408,700,765],[1420,730,755]];
bars('b4',[m4,[[38,320,380],[39,320,380]]],x2,function(z){return 460+z/3},2.7);
var z7=function(z){return 380+z/3},z8=function(z){return 760+z/3},yy=function(z){return 125+z/3};
var c7=[[438,212,218,198,222,'k'],[462,216,219,213,222,'k'],[486,198,217,195,222,'k'],[512,196,200,192,206,'k'],[535,196,200,192,222,'k'],[560,197,202,193,212,'k'],[584,203,220,200,222,'w'],[630,214,218,208,222,'k'],[655,205,218,198,222,'k'],[680,195,206,190,210,'k'],[704,196,218,192,222,'w'],[1016,440,445,412,480,'k'],[1040,433,452,430,455,'k'],[1064,433,445,418,452,'k'],[1088,446,482,400,492,'w'],[1112,480,575,476,580,'w'],[1136,575,595,535,600,'w']];
var c8=[[20,593,680,575,685,'w'],[44,682,710,675,720,'w'],[68,700,710,700,835,'k'],[92,700,735,680,758,'w'],[116,685,738,632,745,'k'],[140,640,685,640,715,'k'],[164,640,675,635,685,'w'],[188,660,677,655,680,'k'],[212,660,663,620,675,'k'],[236,660,663,630,677,'k'],[260,654,665,635,697,'k'],[284,592,657,588,660,'k'],[308,593,643,590,648,'w'],[332,632,647,628,650,'k'],[356,632,672,630,723,'w'],[380,673,715,655,730,'w'],[404,718,724,670,747,'w'],[428,688,725,680,730,'k'],[452,690,748,685,765,'w'],[476,755,761,745,772,'w'],[500,743,762,735,780,'k'],[524,743,760,720,770,'w'],[548,745,762,725,765,'k'],[572,730,747,710,750,'k'],[596,690,732,688,740,'k'],[620,682,696,676,698,'k'],[644,670,683,650,715,'k'],[668,670,718,655,725,'w'],[692,717,780,710,783,'w'],[716,778,783,750,795,'w'],[740,780,815,755,830,'w'],[764,810,818,805,825,'k'],[788,785,808,765,810,'k'],[812,785,817,770,820,'w'],[836,803,815,800,870,'k'],[860,803,807,793,815,'k']];
var h='';function add(c,fx){var x=Math.round(fx(c[0]))+.5;h+='<path d="M'+x+' '+yy(c[3]).toFixed(1)+'V'+yy(c[4]).toFixed(1)+'" stroke="#36c436"/><rect x="'+(x-2.5)+'" y="'+yy(c[1]).toFixed(1)+'" width="5" height="'+((c[2]-c[1])/3).toFixed(1)+'" fill="'+(c[5]=='w'?'#fff':'#000')+'" stroke="#36c436"/>';}
c7.forEach(function(c){add(c,z7)});c8.forEach(function(c){add(c,z8)});
document.getElementById('cand').innerHTML=h;
var r7=[[1016,355],[1085,380],[1130,420]],r8=[[0,430],[60,490],[110,550],[170,590],[240,640],[290,660],[340,667],[425,665],[470,680],[530,695],[610,705],[700,722],[760,745],[810,750],[858,760]];
var b7=[[55,577],[200,560],[400,550],[600,540],[800,530],[1000,520],[1100,517]],b8=[[0,517],[100,520],[400,523],[600,530],[800,538],[858,540]];
function pts(a,b){return a.map(function(p){return z7(p[0]).toFixed(1)+','+yy(p[1]).toFixed(1)}).concat(b.map(function(p){return z8(p[0]).toFixed(1)+','+yy(p[1]).toFixed(1)})).join(' ')}
document.getElementById('mr').setAttribute('points',pts(r7,r8));
document.getElementById('mb').setAttribute('points',pts(b7,b8));
})();
</script>
</body></html>
